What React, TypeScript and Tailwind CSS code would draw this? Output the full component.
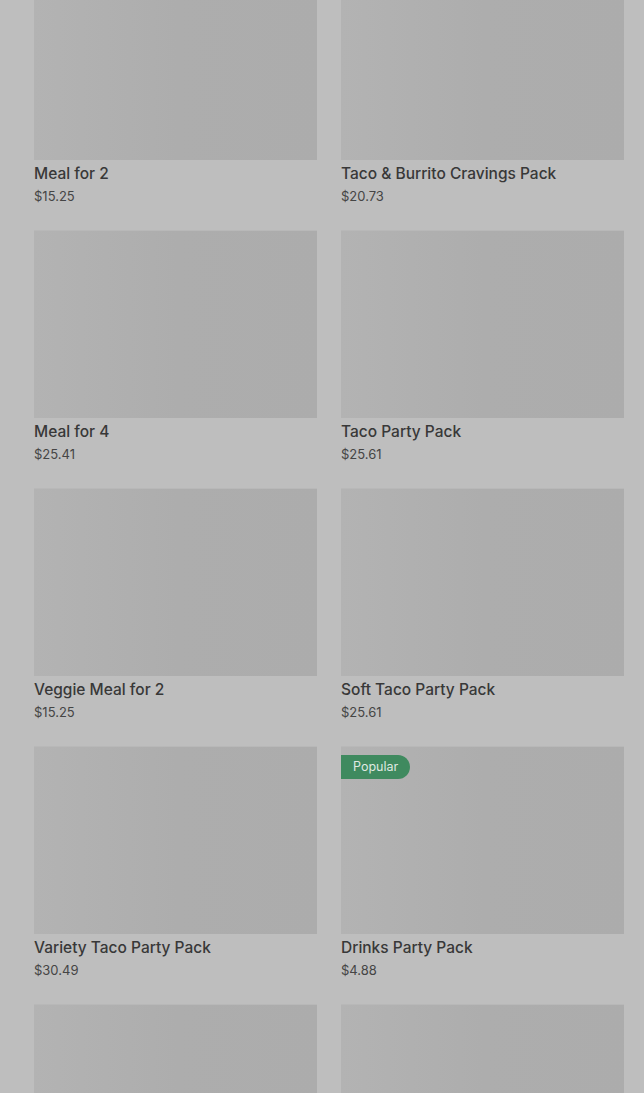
const items = [
  { name: 'Meal for 2', price: '$15.25' },
  { name: 'Taco & Burrito Cravings Pack', price: '$20.73' },
  { name: 'Meal for 4', price: '$25.41' },
  { name: 'Taco Party Pack', price: '$25.61' },
  { name: 'Veggie Meal for 2', price: '$15.25' },
  { name: 'Soft Taco Party Pack', price: '$25.61' },
  { name: 'Variety Taco Party Pack', price: '$30.49' },
  { name: 'Drinks Party Pack', price: '$4.88', badge: 'Popular' },
  { name: '', price: '' },
  { name: '', price: '' },
];

function Card({ name, price, badge }: { name: string; price: string; badge?: string }) {
  return (
    <div className="flex flex-col">
      <div className="relative h-[188px] bg-gradient-to-r from-[#b3b3b3] via-[#adadad] to-[#acacac] border-t border-[#b8b8b8]">
        {badge && (
          <span className="absolute left-0 top-[8px] h-[24px] pl-[12px] pr-[12px] flex items-center bg-[#3f8a5f] text-[#dfe9e2] text-[12.5px] rounded-r-full">
            {badge}
          </span>
        )}
      </div>
      {name && (
        <>
          <div className="h-[24px] mt-[2px] leading-[24px] text-[15.5px] font-medium text-[#383838]">{name}</div>
          <div className="h-[20px] leading-[20px] text-[13px] text-[#454545]">{price}</div>
        </>
      )}
    </div>
  );
}

export default function App() {
  return (
    <main className="min-h-screen bg-[#bebebe] overflow-hidden" style={{ fontFamily: 'Inter, "Noto Sans", sans-serif' }}>
      <div className="pl-[34px] pr-[20px] -mt-[28px] grid grid-cols-2 gap-x-[24px] gap-y-[24px]">
        {items.map((it, i) => (
          <Card key={i} {...it} />
        ))}
      </div>
    </main>
  );
}
